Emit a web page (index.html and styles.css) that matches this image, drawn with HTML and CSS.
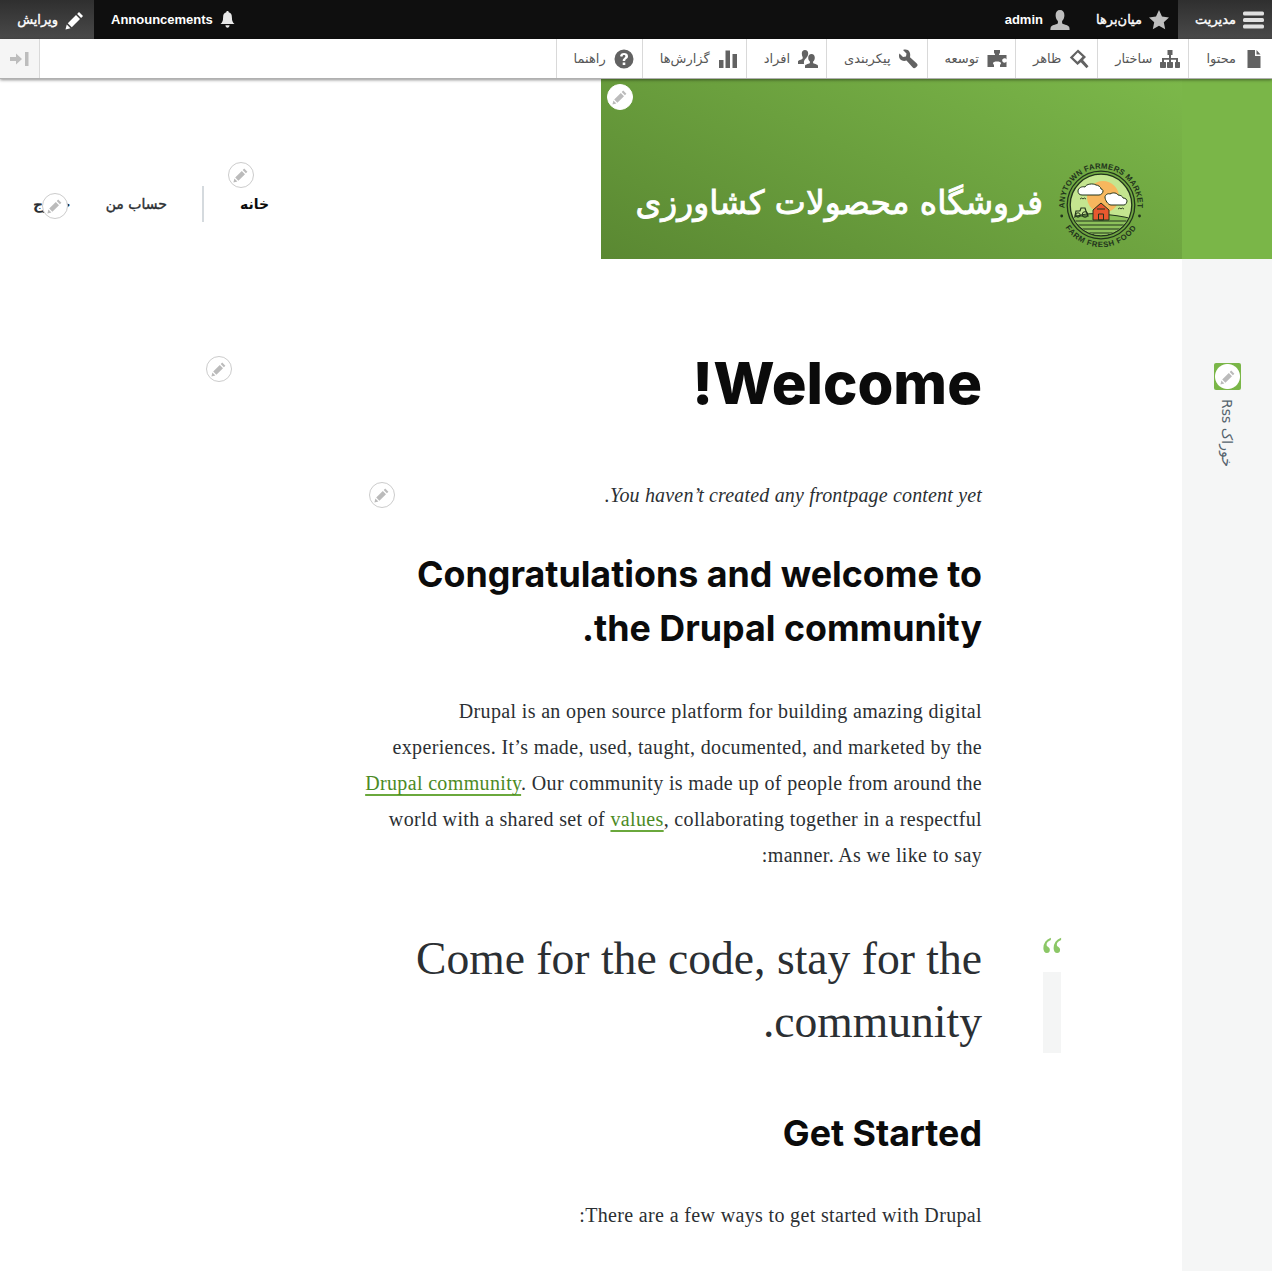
FILE: index.html
```html
<!DOCTYPE html>
<html lang="fa" dir="rtl">
<head>
<meta charset="utf-8">
<title>فروشگاه محصولات کشاورزی</title>
<link rel="stylesheet" href="styles.css">
</head>
<body>
<svg class="defs" width="0" height="0" aria-hidden="true">
  <symbol id="pencil" viewBox="0 0 16 16"><path d="M11.2 1.6l3.2 3.2-1.5 1.5-3.2-3.2zM8.8 4l3.2 3.2-6.6 6.6-3.2-3.2zM1.4 11.6l3 3-4 1z"/></symbol>
</svg>

<nav class="bar">
  <a class="tab tab-active"><svg class="ico" viewBox="0 0 22 18"><rect y="0" width="22" height="4.2" rx="1.6"/><rect y="6.9" width="22" height="4.2" rx="1.6"/><rect y="13.8" width="22" height="4.2" rx="1.6"/></svg>مدیریت</a>
  <a class="tab"><svg class="ico" viewBox="0 0 20 20"><path d="M10 0l3 6.6 7 .8-5.2 4.8 1.4 7L10 15.7l-6.2 3.5 1.4-7L0 7.4l7-.8z"/></svg>میان‌برها</a>
  <a class="tab"><svg class="ico" viewBox="0 0 20 20"><path d="M10 0c2.8 0 4.4 2 4.4 5.2 0 2.600-1 4.600-2.300 5.800v2.200c0 1 5.900 1.600 7 3.600.5.900.5 3.200.5 3.200H.4s0-2.300.5-3.200c1.100-2 7-2.600 7-3.600V11C6.600 9.800 5.600 7.800 5.600 5.200 5.600 2 7.200 0 10 0z"/></svg><span class="latin">admin</span></a>
  <div class="bar-left">
    <a class="tab tab-ann"><svg class="ico ico-bell" viewBox="0 0 16 18"><path d="M8 0c.8 0 1.300.5 1.300 1.300 2.500.6 3.400 2.700 3.400 5.500 0 4 1.100 5.300 2.800 7H.5c1.700-1.700 2.800-3 2.800-7 0-2.800.9-4.900 3.400-5.500C6.700.5 7.200 0 8 0zM5.800 15h4.400c0 1.500-1 2.700-2.200 2.700S5.800 16.500 5.800 15z"/></svg><span class="latin">Announcements</span></a>
    <a class="tab tab-edit"><svg class="ico ico-edit" viewBox="0 0 16 16"><use href="#pencil"/></svg>ویرایش</a>
  </div>
</nav>

<nav class="tray">
  <a class="tray-item"><svg class="tico" viewBox="0 0 20 20"><path d="M3.500 1H11v6h5.500v12h-13zM12.500 1l4 4.600h-4z"/></svg>محتوا</a>
  <a class="tray-item"><svg class="tico" viewBox="0 0 20 20"><path d="M7.500 1h5v5h-1.500v3H18v4h1.500c.3 0 .5.200.5.500V18c0 .6-.4 1-1 1h-3c-.6 0-1-.4-1-1v-4.500c0-.3.200-.5.500-.5H16v-2.200h-5V13h1.500c.3 0 .5.200.5.500V18c0 .6-.4 1-1 1H8c-.6 0-1-.4-1-1v-4.500c0-.3.200-.5.500-.5H9v-2.200H4V13h1.500c.3 0 .5.200.5.500V18c0 .6-.4 1-1 1H1c-.6 0-1-.4-1-1v-4.500c0-.3.200-.5.500-.5H2V9h7V6H7.500z"/></svg>ساختار</a>
  <a class="tray-item"><svg class="tico" viewBox="0 0 20 20"><path fill-rule="evenodd" d="M9 .5l8 7.500-3 3 5.500 6.300-2 1.900-5.700-6L8.500 16 .8 8.500zM8.800 3.600L4 8.500l4.500 4.300 5-5z"/></svg>ظاهر</a>
  <a class="tray-item"><svg class="tico" viewBox="0 0 20 20"><path d="M7 1h6v2.500c0 .8-1 1-1 2V6h7.500v4.500c-.5-.7-1-1.200-2-1.200-1.300 0-2.300 1-2.300 2.200s1 2.200 2.300 2.200c1 0 1.500-.5 2-1.200V18H13v-1.500c0-1 1-1.200 1-2.500 0-1-1.800-1.600-4-1.600S6 13 6 14c0 1.300 1 1.500 1 2.500V18H.5V6H8v-.5c0-1-1-1.200-1-2z"/></svg>توسعه</a>
  <a class="tray-item"><svg class="tico" viewBox="0 0 20 20"><path d="M6.500.5c-1 0-1.500 0-2.500.5l3.500 3.500-.5 3-3 .5-3.500-3.500C0 5.500 0 6 0 7c0 3.500 3.500 6 7.500 4.500l5.800 6.500c1.300 1.500 2 1.700 3.500.5l1-1c1.200-1.200 1-2.200-.5-3.500l-6.300-5.800C12 4 10 .5 6.500.5z"/></svg>پیکربندی</a>
  <a class="tray-item"><svg class="tico" viewBox="0 0 20 20"><path d="M7 1c2 0 3.200 1.400 3.200 3.600 0 1.500-.5 2.700-1.400 3.700 0 0-.5.500-.5 1-.6.400-1.500 1-2 2.300-.5 1-.3 2.400-.3 3.400H0v-2.400c0-1.600 3.500-1.800 4.500-2.900.3-.4.2-1.200.2-1.400C4.200 7.200 3.800 6 3.800 4.600 3.800 2.400 5 1 7 1zM13.500 5c2.100 0 3.300 1.500 3.300 3.700 0 1.700-.7 3-1.700 3.900v1.300c0 .9 4.900 1 4.900 3V19H7v-2c0-2 4.900-2.100 4.900-3v-1.400c-1-1-1.700-2.200-1.700-3.900C10.200 6.500 11.400 5 13.500 5z"/></svg>افراد</a>
  <a class="tray-item"><svg class="tico" viewBox="0 0 20 20"><path d="M1 11h4.500v8H1zM7.500 1.500H12V19H7.500zM14.500 5H19v14h-4.500z"/></svg>گزارش‌ها</a>
  <a class="tray-item"><svg class="tico" viewBox="0 0 20 20"><path fill-rule="evenodd" d="M10 .5a9.500 9.500 0 1 1 0 19 9.500 9.500 0 0 1 0-19zM8.700 13.600v2.500h2.600v-2.500zM10 4c-2.300 0-3.800 1.200-4 3.300l2.400.4c.1-1 .7-1.600 1.600-1.600.8 0 1.400.5 1.400 1.200 0 .6-.4 1-1.200 1.600-1.100.9-1.500 1.600-1.500 3h2.500c0-.9.300-1.200 1.100-1.800 1-.8 1.700-1.600 1.700-2.900C14 5.200 12.400 4 10 4z"/></svg>راهنما</a>
  <a class="tray-toggle" aria-label="toggle"><svg class="toggle-ico" viewBox="0 0 20 14"><path d="M0 5h6V1.500L12 7l-6 5.500V9H0zM15 0h3.500v14H15z"/></svg></a>
</nav>

<div class="page">
  <aside class="rail">
    <div class="rail-top"></div>
    <div class="rail-body">
      <span class="feed">خوراک <span class="latin-feed">Rss</span></span>
      <span class="edit-pin pin-rail"><svg viewBox="0 0 16 16"><use href="#pencil"/></svg></span>
    </div>
  </aside>

  <div class="main">
    <header class="site-head">
      <div class="brand">
        <svg class="logo" viewBox="0 0 90 90" aria-label="logo">
          <defs>
            <path id="arc-top" d="M8.900 51.500A36.500 36.500 0 1 1 81.100 51.500"/>
            <path id="arc-bot" d="M5.500 60.400A42 42 0 0 0 84.500 60.400"/>
            <clipPath id="inner"><circle cx="45" cy="46" r="30"/></clipPath>
          </defs>
          <text class="logo-text"><textPath href="#arc-top" startOffset="50%" text-anchor="middle">ANYTOWN FARMERS MARKET</textPath></text>
          <text class="logo-text logo-text-low"><textPath href="#arc-bot" startOffset="50%" text-anchor="middle">FARM FRESH FOOD</textPath></text>
          <circle cx="5.700" cy="57" r="1.400" fill="#22341c"/><circle cx="83.500" cy="57" r="1.400" fill="#22341c"/>
          <circle cx="45" cy="46" r="33.800" fill="none" stroke="#22341c" stroke-width="1.300"/>
          <circle cx="45" cy="46" r="30.800" fill="#c4e58f" stroke="#22341c" stroke-width="1.300"/>
          <g clip-path="url(#inner)">
            <circle cx="47" cy="38" r="16" fill="#f7b75e"/>
            <path d="M14 60c10-5 20-6 31-5s21 2 32 5v22H14z" fill="#8cc05a" stroke="#22341c" stroke-width="1"/>
            <path d="M14 62h62M14 66h62M16 70h58M20 74h50" stroke="#22341c" stroke-width="1.200"/>
            <path d="M20 52h4l1-3h4l1 3 2 5H19z" fill="none" stroke="#22341c" stroke-width="1.200"/>
            <circle cx="22" cy="56" r="2.200" fill="none" stroke="#22341c"/><circle cx="29" cy="55.500" r="2.800" fill="none" stroke="#22341c"/>
            <path d="M22 32c0-3 4-5 7-4 1-3 8-4 11-2 2 0 5 2 5 4 2 0 2 2 2 2 0 2-2 4-4 4H26c-3 0-4-2-4-4z" fill="#fff" stroke="#22341c" stroke-width="1"/>
            <path d="M49 38c0-2 3-4 5-3 3-2 7-1 8 1 3 0 5 2 5 3 3 0 4 2 4 3s-1 4-3 4H55c-3 0-6-5-6-8z" fill="#fff" stroke="#22341c" stroke-width="1"/>
            <path d="M37 51l8-7 8 7v10H37z" fill="#e8582f" stroke="#22341c" stroke-width="1"/>
            <path d="M42.500 55h5v6h-5zM41 50h8" fill="none" stroke="#22341c" stroke-width="1"/>
            <path d="M24 40q2-2 3 0 1-2 3 0M62 50q2-2 3 0 1-2 3 0" fill="none" stroke="#22341c" stroke-width=".9"/>
          </g>
        </svg>
        <span class="site-name">فروشگاه محصولات کشاورزی</span>
        <span class="edit-pin pin-brand"><svg viewBox="0 0 16 16"><use href="#pencil"/></svg></span>
      </div>
      <div class="site-nav">
        <a class="nav-link nav-home">خانه</a>
        <a class="nav-link nav-account">حساب من</a>
        <a class="nav-link nav-out">خروج</a>
        <span class="edit-pin pin-nav1"><svg viewBox="0 0 16 16"><use href="#pencil"/></svg></span>
        <span class="edit-pin pin-nav2"><svg viewBox="0 0 16 16"><use href="#pencil"/></svg></span>
      </div>
    </header>

    <main class="content">
      <span class="edit-pin pin-title"><svg viewBox="0 0 16 16"><use href="#pencil"/></svg></span>
      <span class="edit-pin pin-empty"><svg viewBox="0 0 16 16"><use href="#pencil"/></svg></span>
      <h1 class="title">Welcome!</h1>
      <p class="lede">You haven’t created any frontpage content yet.</p>
      <h2 class="heading h-first">Congratulations and welcome to the Drupal community.</h2>
      <p class="para">Drupal is an open source platform for building amazing digital experiences. It’s made, used, taught, documented, and marketed by the <a class="link">Drupal community</a>. Our community is made up of people from around the world with a shared set of <a class="link">values</a>, collaborating together in a respectful manner. As we like to say:</p>
      <blockquote class="quote">
        <div class="quote-mark"><span class="quote-glyph">“</span><span class="quote-bar"></span></div>
        <p class="quote-text">Come for the code, stay for the community.</p>
      </blockquote>
      <h2 class="heading h-second">Get Started</h2>
      <p class="para para-last">There are a few ways to get started with Drupal:</p>
    </main>
  </div>
</div>
</body>
</html>
```
FILE: styles.css
```css
* { box-sizing: border-box; }
html, body { margin: 0; padding: 0; }
body { font-family: "Liberation Serif", serif; background: #fff; color: #2b2f33; overflow-x: hidden; }
.defs { position: absolute; }

.bar { display: flex; height: 39px; background: #0f0f0f; font: 13px "DejaVu Sans", sans-serif; -webkit-text-stroke: .35px #fff; color: #fff; }
.bar-left { display: flex; margin-right: auto; }
.tab { display: flex; align-items: center; gap: 7px; height: 39px; padding: 0 9px 0 17px; }
.tab-active { width: 94px; padding: 0 8px; background: linear-gradient(#2f2f2f, #4a4a4a); }
.tab-ann { padding: 0 17px; }
.tab-edit { width: 94px; background: linear-gradient(#2f2f2f, #4a4a4a); }
.latin { font: bold 13px "Liberation Sans", sans-serif; -webkit-text-stroke: 0; }
.ico { width: 20px; height: 20px; fill: #bebebe; flex: none; }
.tab-active .ico { width: 21px; fill: #e0e0e0; }
.ico-bell { width: 15px; height: 17px; fill: #e8e8e8; }
.ico-edit { width: 20px; height: 20px; fill: #fff; }

.tray { position: relative; z-index: 3; display: flex; height: 40px; background: #fff; border-bottom: 1px solid #b0b0b0; box-shadow: 0 1px 3px rgba(0,0,0,.45); font: 13px "Liberation Sans", "DejaVu Sans", sans-serif; color: #565656; }
.tray-item { display: flex; align-items: center; gap: 8px; height: 39px; padding: 0 8px 0 17px; border-left: 1px solid #d9d9d9; }
.tico { width: 20px; height: 20px; fill: #626262; flex: none; }
.tray-toggle { display: flex; align-items: center; justify-content: center; width: 40px; height: 39px; margin-right: auto; background: #f5f5f5; border-right: 1px solid #d9d9d9; }
.toggle-ico { width: 20px; height: 14px; fill: #bdbdbd; }

.page { display: flex; min-height: 1192px; }
.rail { position: relative; flex: none; width: 90px; display: flex; flex-direction: column; background: #f5f6f6; }
.rail-top { height: 180px; background: #7ab648; }
.rail-body { flex: 1; display: flex; justify-content: center; padding-top: 138px; }
.feed { writing-mode: vertical-rl; height: 70px; font: 14px "DejaVu Sans", sans-serif; color: #55646e; }
.latin-feed { font: 14px "DejaVu Sans", sans-serif; }

.main { position: relative; flex: 1; min-width: 0; }
.site-head { display: flex; height: 180px; }
.brand { position: relative; flex: none; width: 581px; display: flex; align-items: flex-end; gap: 13px; padding: 0 36px 10px 0; background: linear-gradient(205deg, #7cb84a 0%, #5a8832 100%); }
.logo { width: 90px; height: 90px; flex: none; overflow: visible; }
.logo-text { font: bold 7.800px "Liberation Sans", sans-serif; letter-spacing: .2px; fill: #22341c; }
.logo-text-low { letter-spacing: .6px; }
.site-name { font: 33px/40px "DejaVu Sans", sans-serif; -webkit-text-stroke: .9px #fff; color: #fff; white-space: nowrap; padding-bottom: 26px; }
.site-nav { position: relative; flex: 1; display: flex; align-items: flex-end; padding: 0 332px 37px 0; font: 14px/36px "DejaVu Sans", sans-serif; white-space: nowrap; }
.nav-link { color: #2b2f33; -webkit-text-stroke: .4px currentColor; }
.nav-home { color: #0d0d0d; font-weight: bold; -webkit-text-stroke: 0; padding-left: 36px; border-left: 2px solid #d5dade; }
.nav-account { padding: 0 35px; }
.nav-out { font-weight: bold; -webkit-text-stroke: 0; }

.edit-pin { position: absolute; z-index: 2; width: 26px; height: 26px; display: flex; align-items: center; justify-content: center; background: #fff; border: 1px solid #ccc; border-radius: 50%; }
.edit-pin svg { width: 16px; height: 16px; fill: #bbb; }
.pin-brand { left: 6px; top: 5px; border-color: #fff; }
.pin-nav1 { left: 228px; top: 83px; }
.pin-nav2 { left: 42px; top: 114px; }
.pin-title { left: 206px; top: 277px; }
.pin-empty { left: 369px; top: 403px; }
.pin-rail { right: 31px; top: 284px; width: 27px; height: 27px; border: 0; border-radius: 2px; background: radial-gradient(circle, #fff 12px, #7ab648 13px); }

.content { width: 618px; margin-right: 200px; }
.title { margin: 94px 0 0; font: 800 58px/60px Inter, "Liberation Sans", sans-serif; color: #0b0b0b; }
.lede { margin: 64px 0 0; font: italic 20px/36px "Liberation Serif", serif; letter-spacing: .17px; }
.heading { margin: 0; font: 700 35.800px/54px Inter, "Liberation Sans", sans-serif; color: #0b0b0b; }
.h-first { margin-top: 34px; }
.h-second { margin-top: 53px; }
.para { margin: 38px 0 0 -4px; font: 20px/36px "Liberation Serif", serif; letter-spacing: .35px; }
.link { color: #4c8a25; text-decoration: underline 2px #6aa83c; text-underline-offset: 4px; }
.quote { display: flex; gap: 61px; margin: 54px -79px 0 0; }
.quote-mark { flex: none; width: 18px; display: flex; flex-direction: column; }
.quote-glyph { height: 45px; font: 50px/54px "Liberation Serif", serif; color: #8cc767; direction: ltr; text-align: left; transform-origin: top left; transform: translate(-2px, -3px) scaleY(1.2); }
.quote-bar { flex: 1; background: #f4f5f5; }
.quote-text { margin: 0; font: 45.600px/63px "Liberation Serif", serif; color: #2b2f33; }
.para-last { margin-top: 37px; }
```
